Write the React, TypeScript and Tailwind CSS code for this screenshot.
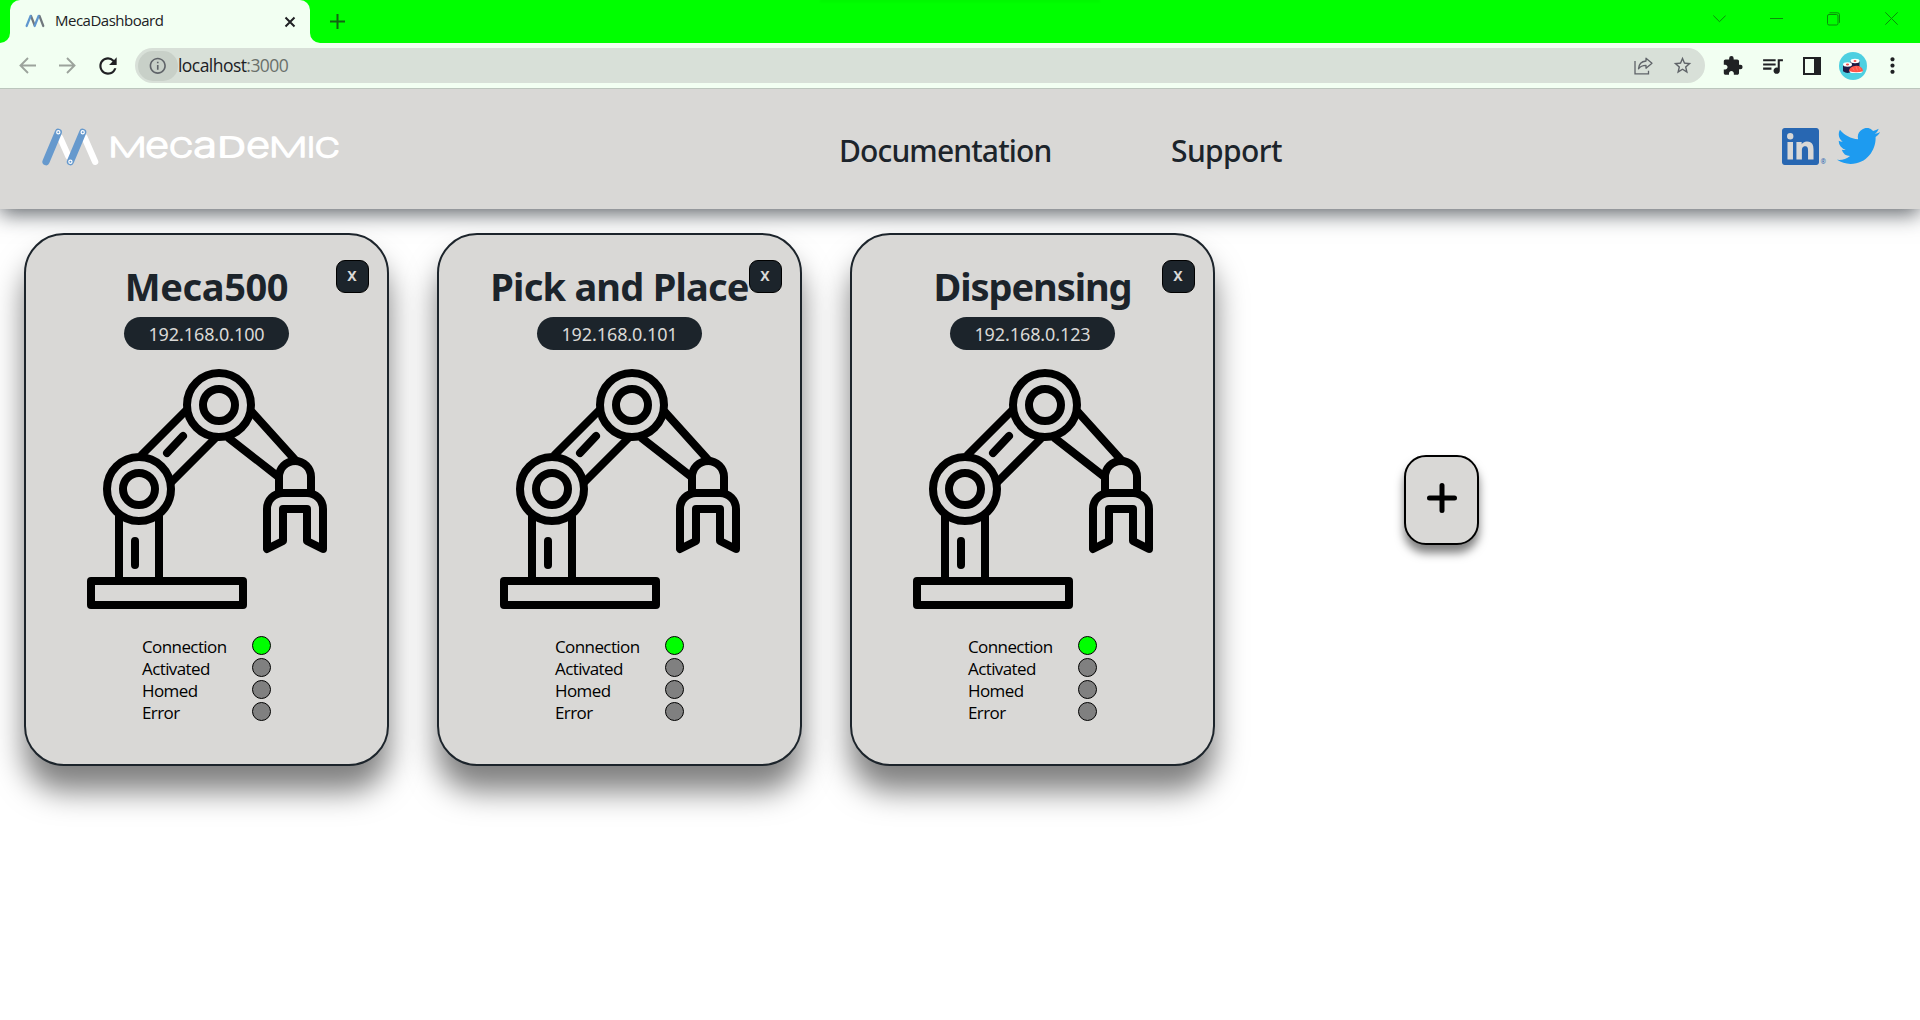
import { MdExtension, MdInfoOutline, MdMoreVert, MdQueueMusic, MdRefresh, MdStarBorder } from "react-icons/md";

type Robot = { name: string; ip: string; tracking: string };

const robots: Robot[] = [
  { name: "Meca500", ip: "192.168.0.100", tracking: "tracking-[-0.4px]" },
  { name: "Pick and Place", ip: "192.168.0.101", tracking: "tracking-[-0.78px]" },
  { name: "Dispensing", ip: "192.168.0.123", tracking: "tracking-[-1.08px]" },
];

const states = [
  { label: "Connection", on: true },
  { label: "Activated", on: false },
  { label: "Homed", on: false },
  { label: "Error", on: false },
];

// Each wordmark letter: glyph, left edge, advance, whether it is a raised lowercase form
const wordmark: [string, number, number, boolean][] = [
  ["M", 107.6, 40, false],
  ["e", 145.3, 23.5, true],
  ["C", 169.3, 23.5, false],
  ["a", 193.5, 23.5, true],
  ["D", 217.5, 28, false],
  ["e", 246.3, 23.5, true],
  ["M", 268.2, 40, false],
  ["I", 307.2, 7.5, false],
  ["C", 315, 24.5, false],
];

function TabIcon() {
  return (
    <svg className="h-[14px] w-5" viewBox="0 0 20 14" fill="none" strokeWidth="2.2" strokeLinecap="round">
      <path d="M6 2L9.5 11M14.5 2l3.8 10" stroke="#70777d" />
      <path d="M1.6 12L5.6 2M9.6 12l4-10" stroke="#5f97cf" />
    </svg>
  );
}

function Logo() {
  return (
    <svg className="h-[54px] w-[300px]" viewBox="41 119.5 300 54" fill="none">
      <g stroke="#fff" strokeLinecap="round" strokeWidth="6.4">
        <path d="M60 137l8.5 19M84.3 136.5l10.8 24.8" />
      </g>
      <g stroke="#6699cd" strokeLinecap="round">
        <path d="M46 161.2l12.3-29.4" strokeWidth="7.2" />
        <path d="M70.4 161.2l12.3-29.4" strokeWidth="7.2" />
      </g>
      <g stroke="#fff" strokeWidth="1.2" fill="#6699cd">
        <circle cx="58.3" cy="131.8" r="1.6" />
        <circle cx="82.7" cy="131.8" r="1.6" />
        <circle cx="70.4" cy="161.2" r="1.6" />
      </g>
      <text y="156" fill="#fff" stroke="#fff" strokeLinejoin="round" fontFamily="Inter, sans-serif">
        {wordmark.map(([ch, x, w, small], i) => (
          <tspan
            key={i}
            x={x}
            textLength={w}
            lengthAdjust="spacingAndGlyphs"
            fontSize={small ? 35 : 26.4}
            fontWeight={ch === "M" ? 100 : 200}
            strokeWidth={ch === "M" ? 1.7 : 2}
          >
            {ch}
          </tspan>
        ))}
      </text>
    </svg>
  );
}

function Sushi() {
  return (
    <svg className="size-7" viewBox="0 0 28 28">
      <circle cx="14" cy="14" r="14" fill="#4dd0e1" />
      <path d="M11.5 9v6q4.500 3 9 0V9z" fill="#1d1b45" />
      <ellipse cx="16" cy="9" rx="4.500" ry="2.200" fill="#fff" />
      <ellipse cx="16" cy="9" rx="1.500" ry=".9" fill="#ef5350" />
      <path d="M4 12.500v6.700q4.500 3.500 9 0v-6.700z" fill="#1d1b45" />
      <ellipse cx="8.500" cy="12.500" rx="4.500" ry="2.200" fill="#fff" />
      <ellipse cx="8.500" cy="12.500" rx="1.600" ry=".9" fill="#ef5350" />
      <path d="M10.500 18h13q.8 2.700-2.500 3h-8q-3-.5-2.500-3z" fill="#fff" />
      <path d="M9.800 19q1-5 7.500-5.300 6 0 6.800 5.500-7 2.300-14.300-.2z" fill="#ff5348" />
      <path d="M13.500 15.500l1.700 3M17 14.500l1.500 4M20.500 15l1 3" stroke="#ff8d84" strokeWidth=".6" />
    </svg>
  );
}

function RobotArm() {
  return (
    <svg className="mt-[19px] ml-px size-60" viewBox="0 0 240 240" fill="none" stroke="#000" strokeWidth="8" strokeLinecap="round" strokeLinejoin="round">
      <circle cx="132" cy="36" r="32" />
      <circle cx="132" cy="36" r="16" />
      <circle cx="52" cy="120" r="32" />
      <circle cx="52" cy="120" r="16" />
      <path strokeLinecap="butt" d="M54 86.500L100 40.500M84 113.500L129 68.500M164.500 42.500l46 51M141 68.500l50 39" />
      <path d="M80 84l16-17M48 172v24" />
      <path strokeLinecap="butt" d="M32 144v68M72 144v68" />
      <path d="M4 212h152v24H4z" />
      <path d="M192 124v-16a16 16 0 0 1 32 0v16" />
      <path d="M180 180v-40a16 16 0 0 1 16-16h24a16 16 0 0 1 16 16v40l-16-8v-32h-24v32z" />
    </svg>
  );
}

function RobotCard({ robot }: { robot: Robot }) {
  return (
    <article className="relative flex h-[533px] w-[365px] flex-col items-center rounded-[40px] border-2 border-[#1c242b] bg-[#d9d8d6] pt-[27px] shadow-[0_25px_30px_rgba(0,0,0,0.5)]">
      <h2 className={`h-12 text-[38px] leading-[48px] font-bold whitespace-nowrap text-[#1c242b] ${robot.tracking}`}>{robot.name}</h2>
      <p className="mt-[7px] h-[33px] w-[165px] rounded-full bg-[#1c242b] pt-px text-center text-[18px] leading-[33px] tracking-[-0.1px] text-[#d9d8d6]">{robot.ip}</p>
      <RobotArm />
      <ul className="mt-[26px] w-[129px] font-['Open_Sans',sans-serif] text-[17px] leading-[24px] tracking-[-0.6px] text-black">
        {states.map((s) => (
          <li key={s.label} className="flex h-[22px] justify-between">
            <span>{s.label}</span>
            <span className={`mt-px size-[19px] rounded-full border border-black ${s.on ? "bg-[#00ff00]" : "bg-[#808080]"}`} />
          </li>
        ))}
      </ul>
      <button className="absolute top-[25px] right-[18px] size-[33px] rounded-[9px] border border-black bg-[#1c242b] pr-px pb-px text-center text-[14px] leading-none font-bold text-[#d9d8d6]">
        X
      </button>
    </article>
  );
}

function TabStrip() {
  return (
    <div className="flex h-[43px] bg-[#00ff00]">
      <div className="flex w-[10px] items-end bg-[#f2fff2]">
        <div className="h-full w-full rounded-br-[10px] bg-[#00ff00]" />
      </div>
      <div className="flex w-[300px] items-center rounded-t-[10px] bg-[#f2fff2] pr-[14px] pb-[2px] pl-[15px]">
        <TabIcon />
        <span className="ml-[10px] font-['Open_Sans',sans-serif] text-[15px] tracking-[-0.5px] text-[#202124]">MecaDashboard</span>
        <svg className="mt-[2px] ml-auto size-[12px]" viewBox="0 0 12 12" stroke="#202124" strokeWidth="2">
          <path d="M1.500 1.500l9 9M10.500 1.500l-9 9" />
        </svg>
      </div>
      <div className="w-[10px] bg-[#f2fff2]">
        <div className="h-full w-full rounded-bl-[10px] bg-[#00ff00]" />
      </div>
      <svg className="mt-[13.5px] ml-[10px] size-[15px]" viewBox="0 0 15 15" stroke="#136313" strokeWidth="2">
        <path d="M7.500 0v15M0 7.500h15" />
      </svg>
      <div className="ml-[475px] h-[3px] w-[280px] self-start bg-linear-to-b from-[#00f000] to-[#00ff00] blur-[1px]" />
      <div className="ml-auto flex pt-3 pr-[22px] text-[#0a8f0a]">
        <svg className="mr-11 size-[13px]" viewBox="0 0 13 13" fill="none" stroke="currentColor">
          <path d="M0.300 3.500l6.200 6.200 6.200-6.200" />
        </svg>
        <svg className="mr-11 size-[13px]" viewBox="0 0 13 13" stroke="currentColor">
          <path d="M0 6.500h13" />
        </svg>
        <svg className="mr-11 size-[14px]" viewBox="0 0 14 14" fill="none" stroke="currentColor">
          <rect x=".5" y="2.500" width="10.500" height="10.500" rx="1.500" />
          <path d="M2.500 .8h8q2 0 2 2v8" />
        </svg>
        <svg className="size-[13px]" viewBox="0 0 13 13" stroke="currentColor">
          <path d="M.3 .3l12.400 12.400M12.700 .3l-12.400 12.400" />
        </svg>
      </div>
    </div>
  );
}

function Toolbar() {
  return (
    <div className="relative z-10 flex h-[46px] items-center border-b border-[#bcc6bd] bg-[#f2fff2] pr-[15px] pl-[19px]">
      <svg className="h-[17px] w-[17px]" viewBox="0 0 17 17" fill="none" stroke="#9ca39c" strokeWidth="1.900">
        <path d="M17 8.500H1.500M9 1L1.500 8.500 9 16" />
      </svg>
      <svg className="ml-[23px] h-[17px] w-[17px]" viewBox="0 0 17 17" fill="none" stroke="#9ca39c" strokeWidth="1.900">
        <path d="M0 8.500h15.500M8 1l7.500 7.500L8 16" />
      </svg>
      <MdRefresh className="ml-[19px] size-[26px] text-[#202124]" />
      <div className="ml-[14px] flex h-[35px] flex-1 items-center rounded-full bg-[#d8e0d8] pr-[12px] pl-[3px]">
        <div className="flex h-[30px] w-10 items-center justify-center rounded-full bg-[#c8d0c8]">
          <MdInfoOutline className="size-[19.5px] text-[#5f6368]" />
        </div>
        <span className="font-['Open_Sans',sans-serif] text-[17.5px] tracking-[-0.55px] text-[#202124]">
          localhost<span className="text-[#6a706b]">:3000</span>
        </span>
        <svg className="ml-auto h-[18px] w-[19px]" viewBox="0 0 19 18" fill="none" stroke="#5f6368" strokeWidth="1.300">
          <path d="M1 4V16.800h13.500v-3" />
          <path d="M12 1.200l6 5-6 5V8.300q-5 0-7.500 3.500Q5 4.700 12 4z" strokeLinejoin="round" />
        </svg>
        <MdStarBorder className="ml-[19px] size-[21px] text-[#5f6368]" />
      </div>
      <div className="flex items-center text-[#202124]">
        <MdExtension className="ml-[17px] size-[21.5px]" />
        <MdQueueMusic className="ml-[17px] size-[25px]" />
        <svg className="ml-[18px] size-[18px]" viewBox="0 0 18 18" fill="currentColor">
          <path d="M0 0h18v18H0zM2 2v14h9V2z" fillRule="evenodd" />
        </svg>
        <div className="ml-[18px]">
          <Sushi />
        </div>
        <MdMoreVert className="ml-[13px] size-[25px]" />
      </div>
    </div>
  );
}

function Header() {
  return (
    <header className="relative z-0 flex h-[120px] items-center bg-[#d9d8d6] pr-[40px] shadow-[0_5px_20px_rgba(28,36,43,0.7)]">
      <div className="w-[839px] pb-[5px] pl-[41px]">
        <Logo />
      </div>
      <nav className="flex pt-[2px] text-[30px] leading-[45px] font-medium tracking-[-0.86px] text-[#1c242b]">
        <a className="w-[332px]">Documentation</a>
        <a className="tracking-[-0.6px]">Support</a>
      </nav>
      <div className="ml-auto flex items-center pb-[6px]">
        <svg className="size-[37px]" viewBox="0 0 24 24" fill="#2867b2">
          <path d="M20.447 20.452h-3.554v-5.569c0-1.328-.027-3.037-1.852-3.037-1.853 0-2.136 1.445-2.136 2.939v5.667H9.351V9h3.414v1.561h.046c.477-.9 1.637-1.850 3.370-1.850 3.601 0 4.267 2.370 4.267 5.455v6.286zM5.337 7.433a2.062 2.062 0 01-2.063-2.065 2.064 2.064 0 112.063 2.065zm1.782 13.019H3.555V9h3.564v11.452zM22.225 0H1.771C.792 0 0 .774 0 1.729v20.542C0 23.227.792 24 1.771 24h20.451C23.200 24 24 23.227 24 22.271V1.729C24 .774 23.200 0 22.222 0h.003z" />
        </svg>
        <span className="mt-[31px] ml-[2px] w-[6px] text-[6.5px] leading-[6px] text-[#2867b2]">®</span>
        <svg className="ml-[10.500px] h-[36px] w-[43px]" viewBox="0 2.200 24 19.600" preserveAspectRatio="none" fill="#1d9bf0">
          <path d="M23.953 4.570a10 10 0 01-2.825.775 4.958 4.958 0 002.163-2.723c-.951.555-2.005.959-3.127 1.184a4.920 4.920 0 00-8.384 4.482C7.690 8.095 4.067 6.130 1.640 3.162a4.822 4.822 0 00-.666 2.475c0 1.710.870 3.213 2.188 4.096a4.904 4.904 0 01-2.228-.616v.060a4.923 4.923 0 003.946 4.827 4.996 4.996 0 01-2.212.085 4.936 4.936 0 004.604 3.417 9.867 9.867 0 01-6.102 2.105c-.390 0-.779-.023-1.170-.067a13.995 13.995 0 007.557 2.209c9.053 0 13.998-7.496 13.998-13.985 0-.210 0-.420-.015-.630A9.935 9.935 0 0024 4.590z" />
        </svg>
      </div>
    </header>
  );
}

export default function App() {
  return (
    <div className="h-[1020px] w-[1920px] overflow-hidden bg-white font-['Noto_Sans','Open_Sans',sans-serif]">
      <TabStrip />
      <Toolbar />
      <Header />
      <main className="relative flex gap-12 pt-6 pl-6">
        {robots.map((r) => (
          <RobotCard key={r.ip} robot={r} />
        ))}
        <button className="mt-[222px] ml-[141px] flex h-[90px] w-[75px] items-center justify-center rounded-[22px] border-2 border-black bg-[#d9d8d6] pb-[5px] shadow-[0_8px_10px_rgba(0,0,0,0.5)]">
          <svg className="size-[30px]" viewBox="0 0 30 30" stroke="#000" strokeWidth="5" strokeLinecap="round">
            <path d="M15 2.500v25M2.500 15h25" />
          </svg>
        </button>
      </main>
    </div>
  );
}
